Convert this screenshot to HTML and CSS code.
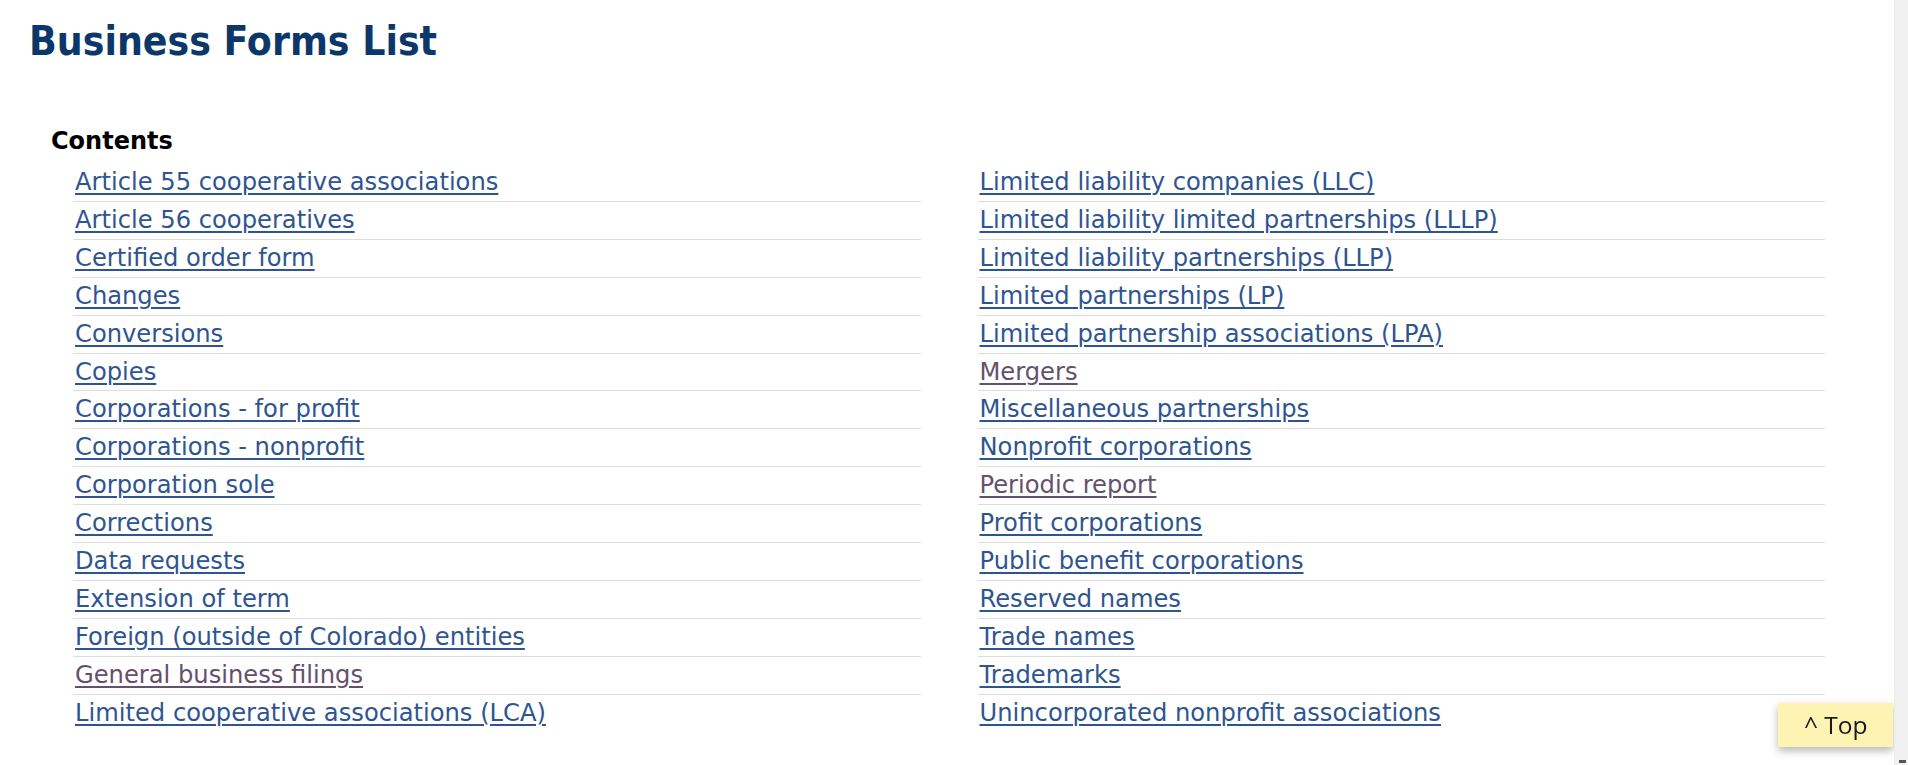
FILE: index.html
```html
<!DOCTYPE html>
<html lang="en">
<head>
<meta charset="utf-8">
<title>Business Forms List</title>
<link rel="stylesheet" href="styles.css">
</head>
<body>
<div class="page">
  <h1 class="title">Business Forms List</h1>
  <h2 class="contents">Contents</h2>
  <div class="lists">
    <ul class="list">
      <li><a href="#a55">Article 55 cooperative associations</a></li>
      <li><a href="#a56">Article 56 cooperatives</a></li>
      <li><a href="#cert">Certified order form</a></li>
      <li><a href="#changes">Changes</a></li>
      <li><a href="#conv">Conversions</a></li>
      <li><a href="#copies">Copies</a></li>
      <li><a href="#corp-profit">Corporations - for profit</a></li>
      <li><a href="#corp-np">Corporations - nonprofit</a></li>
      <li><a href="#sole">Corporation sole</a></li>
      <li><a href="#corr">Corrections</a></li>
      <li><a href="#data">Data requests</a></li>
      <li><a href="#ext">Extension of term</a></li>
      <li><a href="#foreign">Foreign (outside of Colorado) entities</a></li>
      <li><a class="visited" href="#general">General business filings</a></li>
      <li><a href="#lca">Limited cooperative associations (LCA)</a></li>
    </ul>
    <ul class="list">
      <li><a href="#llc">Limited liability companies (LLC)</a></li>
      <li><a href="#lllp">Limited liability limited partnerships (LLLP)</a></li>
      <li><a href="#llp">Limited liability partnerships (LLP)</a></li>
      <li><a href="#lp">Limited partnerships (LP)</a></li>
      <li><a href="#lpa">Limited partnership associations (LPA)</a></li>
      <li><a class="visited" href="#mergers">Mergers</a></li>
      <li><a href="#misc">Miscellaneous partnerships</a></li>
      <li><a href="#np">Nonprofit corporations</a></li>
      <li><a class="visited" href="#periodic">Periodic report</a></li>
      <li><a href="#profit">Profit corporations</a></li>
      <li><a href="#pbc">Public benefit corporations</a></li>
      <li><a href="#reserved">Reserved names</a></li>
      <li><a href="#trade">Trade names</a></li>
      <li><a href="#tm">Trademarks</a></li>
      <li><a href="#una">Unincorporated nonprofit associations</a></li>
    </ul>
  </div>
</div>
<a class="top-btn" href="#">^ Top</a>
<div class="scrollbar"><span class="scroll-arrow"></span></div>
</body>
</html>
```

FILE: styles.css
```css
html, body {
  margin: 0;
  padding: 0;
  background: #ffffff;
}

.page {
  padding: 18px 0 0 29px;
  font-family: "DejaVu Sans", Verdana, sans-serif;
}

.title {
  margin: 0;
  font-family: "DejaVu Sans Condensed", "DejaVu Sans", sans-serif;
  font-weight: bold;
  font-size: 40.5px;
  line-height: 46px;
  color: #0b3868;
  letter-spacing: 0;
}

.contents {
  margin: 63px 0 0 22px;
  font-family: "DejaVu Sans", sans-serif;
  font-weight: bold;
  font-size: 24px;
  line-height: 28px;
  color: #000;
}

.lists {
  display: flex;
  gap: 57px;
  margin: 9px 0 0 44px;
  width: 1752px;
}

.list {
  flex: 1;
  list-style: none;
  margin: 0;
  padding: 0;
}

.list li {
  font-size: 24.2px;
  line-height: 36.9px;
  padding-left: 2px;
  border-bottom: 1px solid #dddddd;
}

.list li:last-child {
  border-bottom: none;
}

.list a {
  color: #2e5591;
  text-decoration: underline;
  text-decoration-thickness: 1.5px;
  text-underline-offset: 3px;
}

.list a.visited {
  color: #65506e;
}

.top-btn {
  position: fixed;
  right: 15px;
  bottom: 18px;
  width: 115px;
  height: 44px;
  box-sizing: border-box;
  padding-left: 26px;
  background: #fdf3b3;
  color: #1a1a1a;
  font-family: "Open Sans", "Noto Sans", sans-serif;
  font-size: 24.5px;
  line-height: 44px;
  text-decoration: none;
  box-shadow: 0 4px 8px rgba(0, 0, 0, 0.28);
}

.scrollbar {
  position: fixed;
  top: 0;
  right: 0;
  width: 13px;
  height: 100%;
  background: #f1f1f1;
  border-left: 1px solid #ececec;
}

.scroll-arrow {
  position: absolute;
  right: 2px;
  bottom: 2px;
  width: 7px;
  height: 3px;
  background: #555;
}
```
